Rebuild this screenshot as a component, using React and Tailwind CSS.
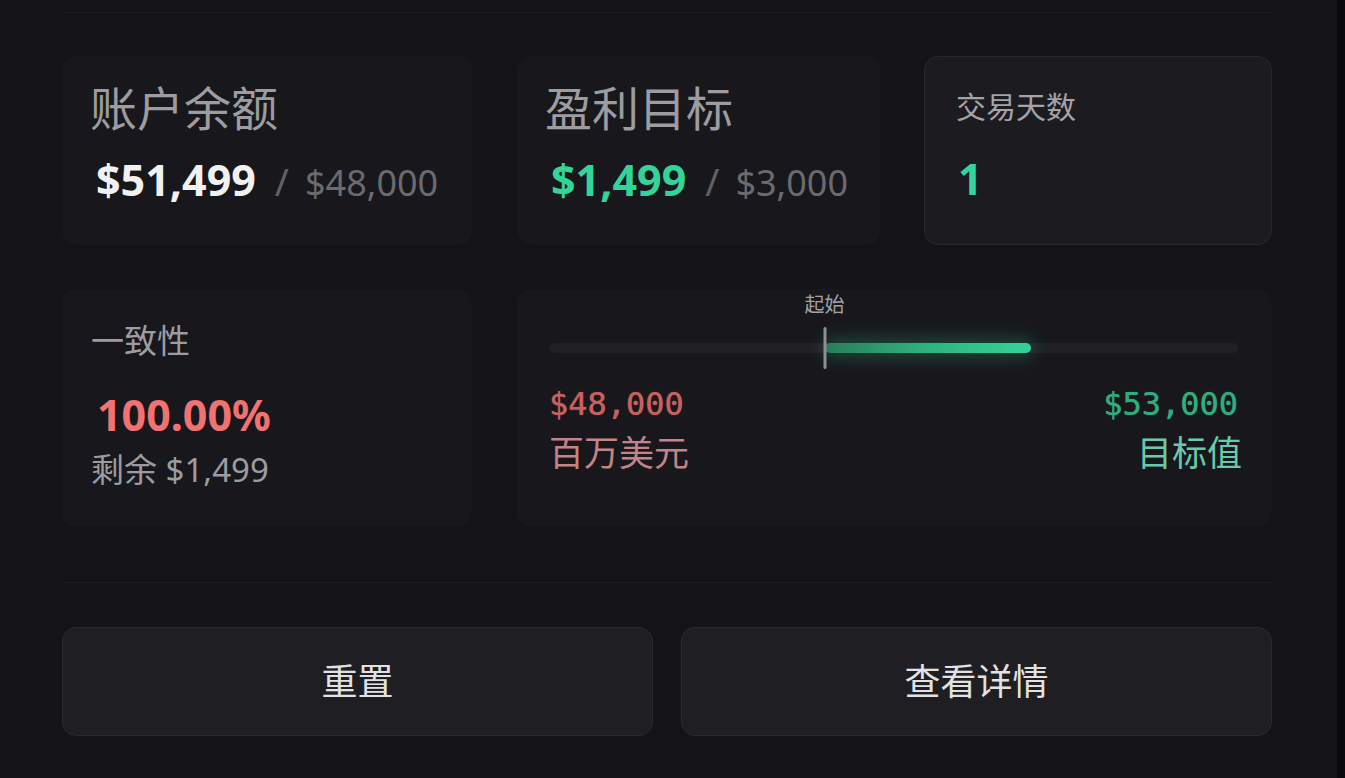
import React from "react";

const sans = { fontFamily: '"Noto Sans", "Noto Sans CJK SC", sans-serif' };
const mono = { fontFamily: '"DejaVu Sans Mono", "Liberation Mono", monospace' };

export default function App() {
  return (
    <div className="flex h-[778px] w-full overflow-hidden bg-[#131318]" style={sans}>
      <div className="flex-1 pl-[62px] pr-[65px]">
        <div className="mt-[12px] h-px bg-[#1d1d22]" />

        <div className="mt-[43px] grid grid-cols-[410px_363px_1fr] gap-x-[45px]">
          <div className="h-[189px] rounded-[14px] bg-[#18181c] pl-[28px] pt-[23px]">
            <div className="text-[47px] leading-[58px] text-[#9c9ca1]">账户余额</div>
            <div className="mt-[18px] flex items-baseline pl-[6px] leading-[50px]">
              <span className="text-[43px] font-bold text-[#f1f1f1]">$51,499</span>
              <span className="ml-[19px] text-[38px] text-[#606065]">/</span>
              <span className="ml-[16px] text-[36px] text-[#6a6a6f]">$48,000</span>
            </div>
          </div>

          <div className="h-[189px] rounded-[14px] bg-[#18181c] pl-[28px] pt-[23px]">
            <div className="text-[47px] leading-[58px] text-[#9c9ca1]">盈利目标</div>
            <div className="mt-[18px] flex items-baseline pl-[6px] leading-[50px]">
              <span className="text-[43px] font-bold text-[#34d399]">$1,499</span>
              <span className="ml-[19px] text-[38px] text-[#606065]">/</span>
              <span className="ml-[16px] text-[36px] text-[#6a6a6f]">$3,000</span>
            </div>
          </div>

          <div className="-ml-px h-[189px] rounded-[14px] border border-[#27272c] bg-[#1c1c20] pl-[31px] pt-[30px]">
            <div className="text-[30px] leading-[40px] text-[#a3a3a8]">交易天数</div>
            <div className="mt-[27px] pl-[2px] text-[43px] font-bold leading-[50px] text-[#34d399]">1</div>
          </div>
        </div>

        <div className="mt-[44px] grid grid-cols-[410px_1fr] gap-x-[45px]">
          <div className="h-[238px] rounded-[14px] bg-[#18181c] pl-[29px] pt-[29px]">
            <div className="text-[33px] leading-[46px] text-[#9c9ca1]">一致性</div>
            <div className="mt-[23px] pl-[6px] text-[43px] font-bold leading-[56px] text-[#f07272]">100.00%</div>
            <div className="mt-[5px] text-[33px] leading-[44px] text-[#9c9ca1]">剩余 $1,499</div>
          </div>

          <div className="h-[238px] rounded-[14px] bg-[#18181c] pl-[32px] pr-[34px]">
            <div className="relative h-[84px]">
              <div className="absolute left-[40%] top-[2px] -translate-x-1/2 text-[20px] leading-[28px] text-[#a2a2a7]">起始</div>
              <div className="absolute left-0 right-0 top-[54px] h-[10px] rounded-full bg-[#212125]" />
              <div
                className="absolute left-[40%] top-[54px] h-[10px] w-[30%] rounded-full bg-gradient-to-r from-[#2a7d5c] via-[#2fb47e] to-[#34d399]"
                style={{ boxShadow: "0 0 18px 2px rgba(52,211,153,0.35)" }}
              />
              <div className="absolute left-[40%] top-[38px] h-[42px] w-[3px] -translate-x-1/2 rounded-full bg-[#8f8f94]" />
            </div>
            <div className="mt-[12px] flex items-start justify-between">
              <div>
                <div className="text-[32px] leading-[38px] text-[#c8605f] [text-shadow:0_0_0.8px_#c8605f]" style={mono}>$48,000</div>
                <div className="mt-[8px] text-[35px] leading-[44px] text-[#c38489]">百万美元</div>
              </div>
              <div className="flex flex-col items-end">
                <div className="text-[32px] leading-[38px] text-[#2fae7c] [text-shadow:0_0_0.8px_#2fae7c]" style={mono}>$53,000</div>
                <div className="mt-[8px] -mr-[4px] text-[35px] leading-[44px] text-[#6cc8aa]">目标值</div>
              </div>
            </div>
          </div>
        </div>

        <div className="mt-[55px] h-px bg-[#1d1d22]" />

        <div className="mt-[44px] grid grid-cols-2 gap-x-[28px]">
          <button className="flex h-[109px] items-center justify-center rounded-[14px] border border-[#29292e] bg-[#1f1f23] text-[36px] text-[#e2e2e2]" style={sans}>
            重置
          </button>
          <button className="flex h-[109px] items-center justify-center rounded-[14px] border border-[#29292e] bg-[#1f1f23] text-[36px] text-[#e2e2e2]" style={sans}>
            查看详情
          </button>
        </div>
      </div>
      <div className="w-[8px] bg-[#0a0a0d]" />
    </div>
  );
}
